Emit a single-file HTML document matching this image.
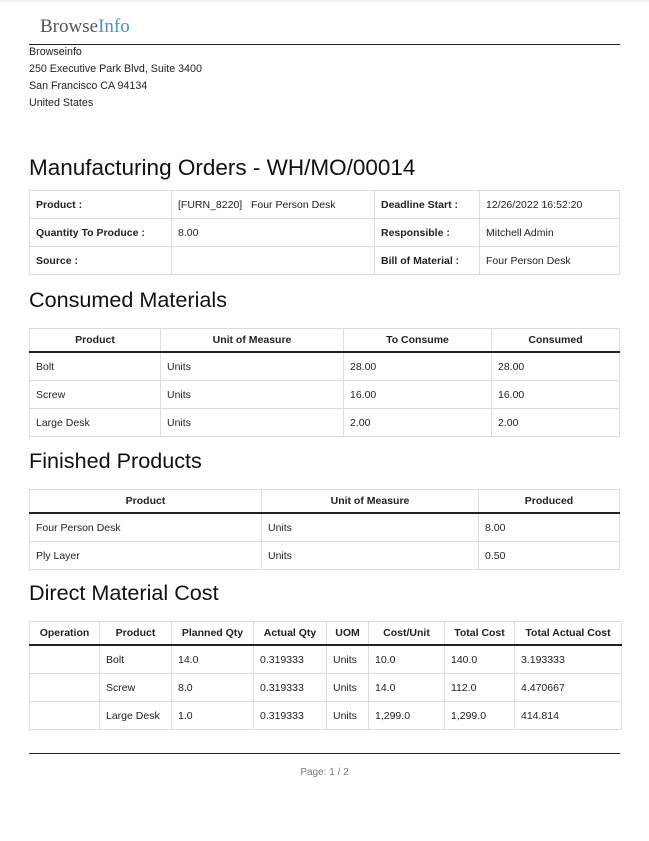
<!DOCTYPE html>
<html><head><meta charset="utf-8"><style>
body{margin:0;width:649px;height:841px;background:#fff;font-family:"Liberation Sans",sans-serif;color:#222;position:relative;overflow:hidden}
.a{position:absolute}
.logo{left:40px;top:16px;font-family:"Liberation Serif",serif;font-size:19px;color:#555}
.logo span{color:#4e8fc0}
.hr{left:29px;width:591px;height:1px;background:#222}
.addr{left:29px;font-size:10.7px;line-height:17px;top:44px}
h2{position:absolute;left:29px;margin:0;font-weight:normal;font-size:21.6px;color:#111}
table{position:absolute;left:29px;border-collapse:collapse;font-size:10.5px}
td,th{border:1px solid #ddd;padding:0 6px;height:27px;text-align:left;white-space:nowrap}
th{height:22px;text-align:center;font-weight:bold;border-bottom:2px solid #222}
b{font-weight:bold}
</style></head><body>
<div style="position:absolute;left:0;top:0;width:649px;height:3px;background:linear-gradient(#eee,#fff)"></div>
<div class="a logo">Browse<span>Info</span></div>
<div class="a hr" style="top:44px"></div>
<div class="a addr">Browseinfo<br>250 Executive Park Blvd, Suite 3400<br>San Francisco CA 94134<br>United States</div>

<h2 style="top:155px;font-size:22.5px">Manufacturing Orders - WH/MO/00014</h2>
<table style="top:190px;width:591px">
<colgroup><col style="width:142px"><col style="width:203px"><col style="width:105px"><col></colgroup>
<tr><td><b>Product :</b></td><td>[FURN_8220] &nbsp; Four Person Desk</td><td><b>Deadline Start :</b></td><td>12/26/2022 16:52:20</td></tr>
<tr><td><b>Quantity To Produce :</b></td><td>8.00</td><td><b>Responsible :</b></td><td>Mitchell Admin</td></tr>
<tr><td><b>Source :</b></td><td></td><td><b>Bill of Material :</b></td><td>Four Person Desk</td></tr>
</table>

<h2 style="top:287px">Consumed Materials</h2>
<table style="top:328px;width:591px">
<colgroup><col style="width:131px"><col style="width:183px"><col style="width:148px"><col></colgroup>
<tr><th>Product</th><th>Unit of Measure</th><th>To Consume</th><th>Consumed</th></tr>
<tr><td>Bolt</td><td>Units</td><td>28.00</td><td>28.00</td></tr>
<tr><td>Screw</td><td>Units</td><td>16.00</td><td>16.00</td></tr>
<tr><td>Large Desk</td><td>Units</td><td>2.00</td><td>2.00</td></tr>
</table>

<h2 style="top:448px">Finished Products</h2>
<table style="top:489px;width:591px">
<colgroup><col style="width:232px"><col style="width:217px"><col></colgroup>
<tr><th>Product</th><th>Unit of Measure</th><th>Produced</th></tr>
<tr><td>Four Person Desk</td><td>Units</td><td>8.00</td></tr>
<tr><td>Ply Layer</td><td>Units</td><td>0.50</td></tr>
</table>

<h2 style="top:580px">Direct Material Cost</h2>
<table style="top:621px;width:593px">
<colgroup><col style="width:70px"><col style="width:72px"><col style="width:82px"><col style="width:73px"><col style="width:42px"><col style="width:76px"><col style="width:70px"><col></colgroup>
<tr><th>Operation</th><th>Product</th><th>Planned Qty</th><th>Actual Qty</th><th>UOM</th><th>Cost/Unit</th><th>Total Cost</th><th>Total Actual Cost</th></tr>
<tr><td></td><td>Bolt</td><td>14.0</td><td>0.319333</td><td>Units</td><td>10.0</td><td>140.0</td><td>3.193333</td></tr>
<tr><td></td><td>Screw</td><td>8.0</td><td>0.319333</td><td>Units</td><td>14.0</td><td>112.0</td><td>4.470667</td></tr>
<tr><td></td><td>Large Desk</td><td>1.0</td><td>0.319333</td><td>Units</td><td>1,299.0</td><td>1,299.0</td><td>414.814</td></tr>
</table>

<div class="a hr" style="top:753px"></div>
<div class="a" style="left:0;width:649px;top:767px;text-align:center;font-size:10px;color:#777">Page: 1 / 2</div>
</body></html>
